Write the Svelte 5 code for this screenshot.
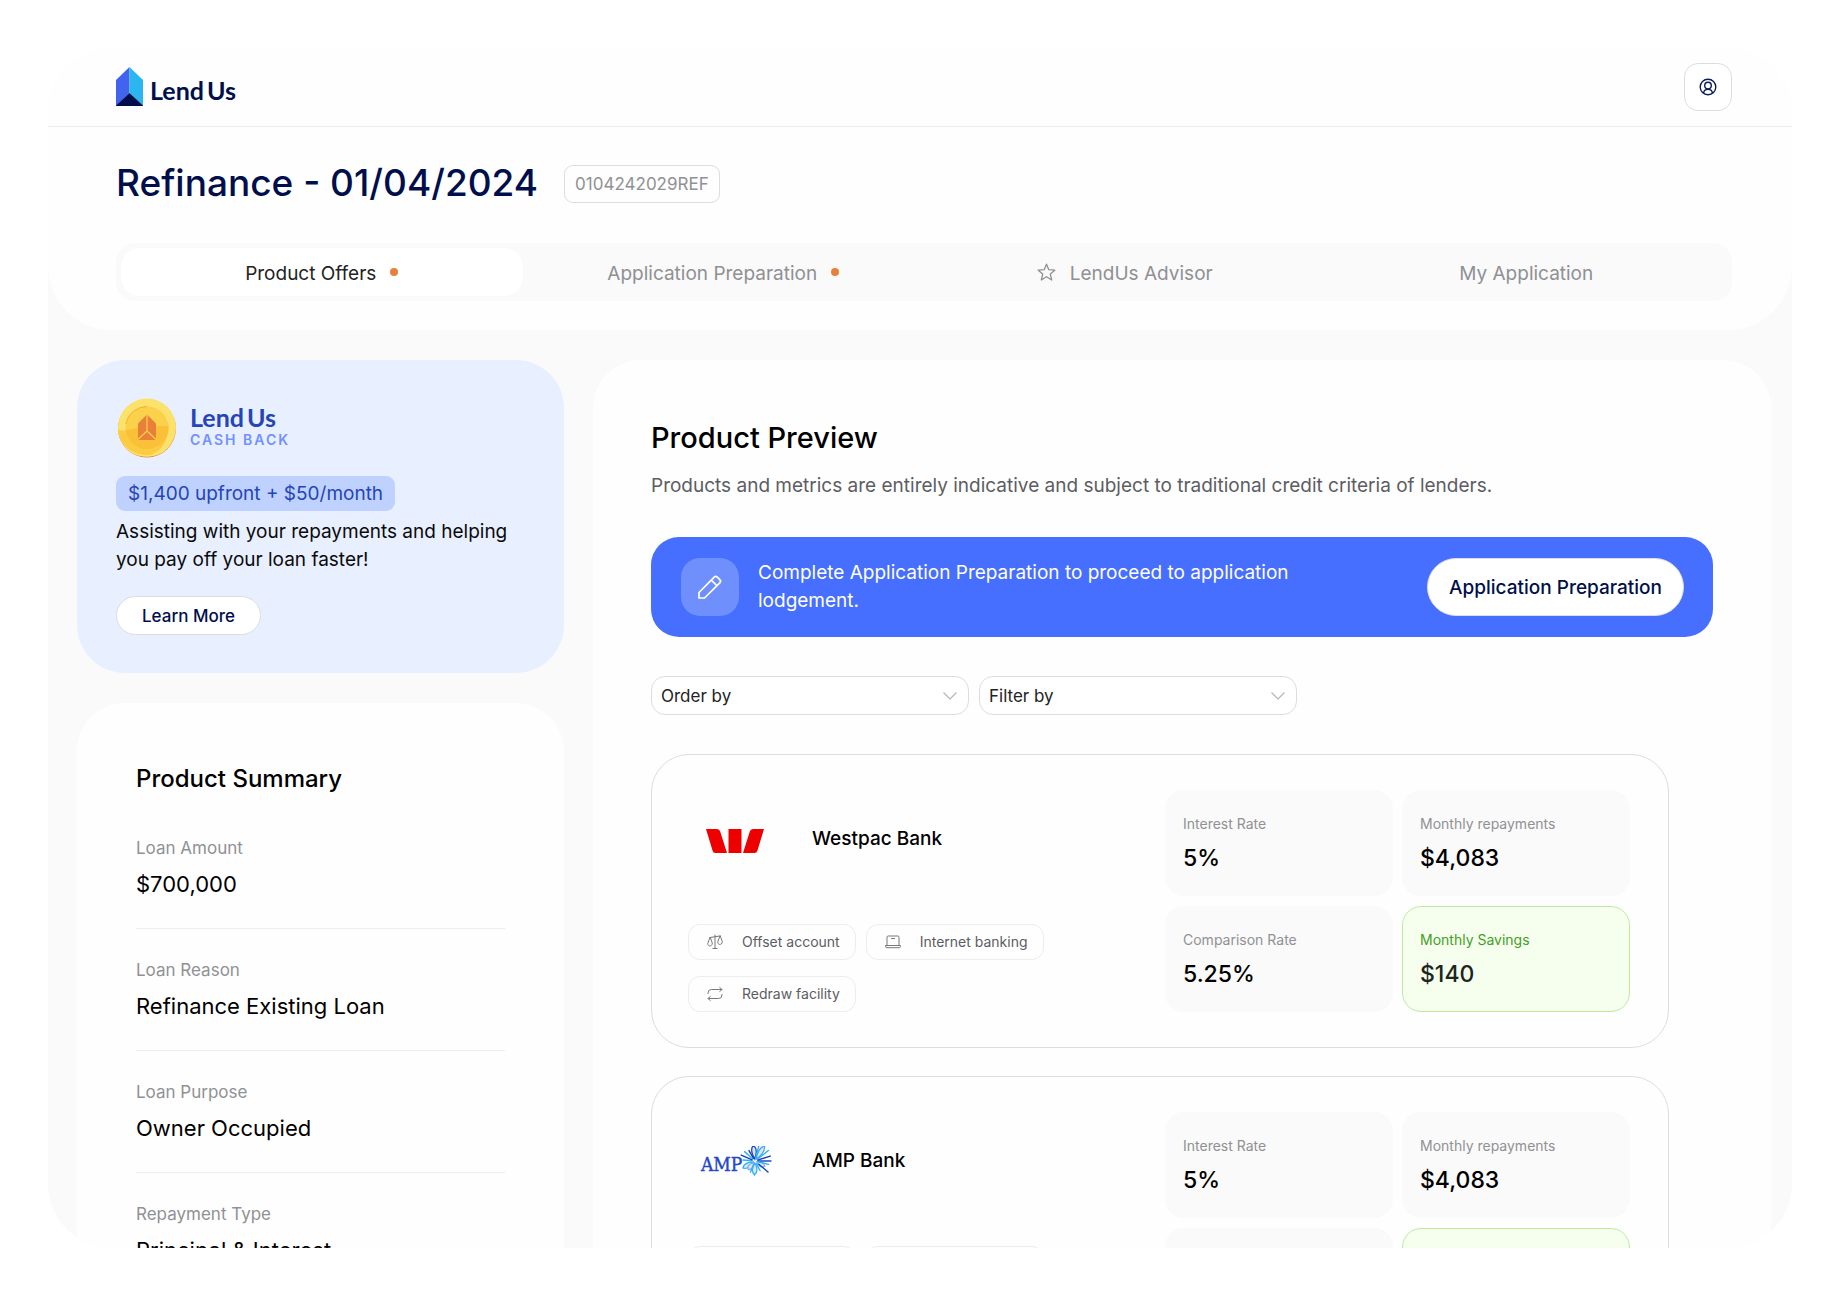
<script>
  const tabs = [
    { label: 'Product Offers', dot: true, active: true },
    { label: 'Application Preparation', dot: true },
    { label: 'LendUs Advisor', star: true },
    { label: 'My Application' }
  ];

  const summary = [
    { label: 'Loan Amount', value: '$700,000' },
    { label: 'Loan Reason', value: 'Refinance Existing Loan' },
    { label: 'Loan Purpose', value: 'Owner Occupied' },
    { label: 'Repayment Type', value: 'Principal & Interest' }
  ];

  const selects = [
    { id: 'order', label: 'Order by' },
    { id: 'filter', label: 'Filter by' }
  ];

  const metrics = [
    { label: 'Interest Rate', value: '5%' },
    { label: 'Monthly repayments', value: '$4,083' },
    { label: 'Comparison Rate', value: '5.25%' },
    { label: 'Monthly Savings', value: '$140', saving: true }
  ];

  const features = [
    { icon: 'scales', label: 'Offset account' },
    { icon: 'laptop', label: 'Internet banking' },
    { icon: 'repeat', label: 'Redraw facility' }
  ];

  const banks = [
    { id: 'westpac', name: 'Westpac Bank' },
    { id: 'amp', name: 'AMP Bank' }
  ];

  // Rays of the AMP starburst: angle, inner radius, outer radius, colour
  const rays = [
    [0, 3, 16, '#2447c8'], [14, 3, 14, '#2cb5f0'], [40, 5, 17, '#1b3fb5'], [62, 3, 11, '#2cb5f0'],
    [112, 3, 12, '#2cb5f0'], [185, 3, 12, '#2cb5f0'], [203, 3, 15, '#1b3fb5'],
    [222, 3, 14, '#2cb5f0'], [240, 3, 12, '#1b3fb5'], [284, 3, 17, '#2cb5f0'],
    [322, 3, 17, '#2cb5f0'], [342, 3, 16, '#1b3fb5']
  ];
  // Petals: angle, length, colour
  const petals = [
    [92, 14, '#2cb5f0'], [150, 14, '#2cb5f0'], [128, 11, '#8fa8f5'], [264, 16, '#2447c8'],
    [302, 18, '#4aa4f0'], [28, 11, '#8fa8f5']
  ];
</script>

<div class="page">
  <div class="window">
    <header class="top">
      <div class="brand-bar">
        <a class="logo" href="#home">
          <svg width="27" height="39" viewBox="0 0 27 39" aria-hidden="true">
            <path d="M13.5 0L0 13v26l13.5-13z" fill="#4163ee" />
            <path d="M13.5 0L27 13v26L13.5 26z" fill="#2cb6f0" />
            <path d="M13.5 26L0 38.5V39h27v-.5z" fill="#000f4b" />
          </svg>
          <span class="wordmark">Lend<span>Us</span></span>
        </a>
        <button class="user" aria-label="Account">
          <svg width="18" height="18" viewBox="0 0 18 18" fill="none" stroke="#0c1b5c" stroke-width="1.4" aria-hidden="true">
            <circle cx="9" cy="9" r="7.8" />
            <circle cx="9" cy="7.6" r="3.3" />
            <path d="M4.6 15.2c.2-2.6 1.6-3.8 4.4-3.8s4.2 1.200 4.400 3.800" />
          </svg>
        </button>
      </div>
      <div class="heading">
        <h1>Refinance - 01/04/2024</h1>
        <span class="ref">0104242029REF</span>
      </div>
      <nav class="tabs">
        {#each tabs as tab}
          <button class="tab" class:active={tab.active}>
            {#if tab.star}
              <svg width="19" height="19" viewBox="0 0 19 19" fill="none" stroke="#8f9094" stroke-width="1.3" stroke-linejoin="round" aria-hidden="true">
                <path d="M9.500 1.200l2.300 5.500 6 .5-4.500 3.900 1.400 5.900-5.200-3.200L4.300 17l1.400-5.900L1.200 7.200l6-.5z" />
              </svg>
            {/if}
            <span>{tab.label}</span>
            {#if tab.dot}<i class="dot"></i>{/if}
          </button>
        {/each}
      </nav>
    </header>

    <main class="body">
      <aside class="side">
        <section class="cashback">
          <div class="cash-head">
            <svg width="60" height="60" viewBox="-1 0 60 60" aria-hidden="true">
              <circle cx="30" cy="30.500" r="29" fill="#ea8a3c" />
              <circle cx="30" cy="29.500" r="29" fill="#fce16a" />
              <path d="M1 32C14 35 22 28 33 28s14 1 17-.5c3 10-2 25-20 31C14 58.500 2 47 1 32z" fill="#fbcb42" />
              <path d="M4 42c6 10 15 15 26 15s20-5 26-15c-5 11-14 16.500-26 16.500S9 53 4 42z" fill="#fce16a" />
              <circle cx="30" cy="30" r="21.500" fill="#fbd04a" />
              <path d="M8.500 31.500C18 32 24 27 33 27.500c8 .5 13 1 18.500 0A21.500 21.500 0 0 1 8.500 31.500z" fill="#fac038" />
              <path d="M8.900 26A21.500 21.500 0 0 1 30 8.500" fill="none" stroke="#f3b03a" stroke-width="1" />
              <path d="M30 16.500l9 9V42H21V25.500z" fill="#e8803a" />
              <path d="M30 17v16M30 33l-9 8.500M30 33l9 8.500" stroke="#fbd04a" stroke-width="1.200" fill="none" />
            </svg>
            <div class="cash-brand">
              <span class="wordmark">Lend<span>Us</span></span>
              <span class="cash-label">CASH BACK</span>
            </div>
          </div>
          <strong class="offer">$1,400 upfront + $50/month</strong>
          <p>Assisting with your repayments and helping you pay off your loan faster!</p>
          <button class="learn">Learn More</button>
        </section>

        <section class="summary">
          <h2>Product Summary</h2>
          <dl>
            {#each summary as row}
              <div class="row">
                <dt>{row.label}</dt>
                <dd>{row.value}</dd>
              </div>
            {/each}
          </dl>
        </section>
      </aside>

      <section class="preview">
        <h2>Product Preview</h2>
        <p class="lead">Products and metrics are entirely indicative and subject to traditional credit criteria of lenders.</p>

        <div class="banner">
          <div class="banner-icon">
            <svg width="26" height="26" viewBox="0 0 26 26" fill="none" stroke="#fff" stroke-width="1.700" stroke-linejoin="round" aria-hidden="true">
              <path d="M2 18.500L17.200 3.200a2.200 2.200 0 0 1 3.100 0l2.500 2.500a2.200 2.200 0 0 1 0 3.100L7.500 24H2zM14.300 6.100l5.600 5.600" />
            </svg>
          </div>
          <p>Complete Application Preparation to proceed to application lodgement.</p>
          <button>Application Preparation</button>
        </div>

        <div class="filters">
          {#each selects as s}
            <div class="select">
              <select id={s.id} aria-label={s.label}>
                <option>{s.label}</option>
              </select>
              <svg width="14" height="8" viewBox="0 0 14 8" fill="none" stroke="#b4b5b8" stroke-width="1.200" aria-hidden="true">
                <path d="M.5.5L7 7l6.500-6.500" />
              </svg>
            </div>
          {/each}
        </div>

        <div class="offers">
          {#each banks as bank}
            <article class="bank">
              <div class="bank-info">
                <div class="bank-head">
                  <div class="bank-logo">
                    {#if bank.id === 'westpac'}
                      <svg width="58" height="24" viewBox="0 0 58 24" fill="#ee0000" aria-hidden="true">
                        <path d="M0 0h11q2.500 0 3.200 2.500L21 24H9.500Q7.200 24 6.500 21.500zM22.500 0h13v24h-13zM58 0H47q-2.500 0-3.200 2.500L37 24h11.500q2.300 0 3-2.500z" />
                      </svg>
                    {:else}
                      <svg width="74" height="34" viewBox="0 0 74 34" aria-hidden="true">
                        <text class="amp" x="3" y="25">AMP</text>
                        <g transform="translate(57 15)" fill="none" stroke-linecap="round">
                          {#each petals as [angle, length, colour]}
                            <path transform="rotate({angle})" d="M2 0Q{length * 0.7} -4.500 {length} 0Q{length * 0.7} 4.500 2 0z" stroke={colour} stroke-width="1.300" fill="#dbe6ff" />
                          {/each}
                          {#each rays as [angle, from, to, colour]}
                            <path transform="rotate({angle})" d="M{from} 0H{to}" stroke={colour} stroke-width="1.400" />
                          {/each}
                        </g>
                      </svg>
                    {/if}
                  </div>
                  <h3>{bank.name}</h3>
                </div>
                <ul class="chips">
                  {#each features as f}
                    <li>
                      <svg width="16" height="16" viewBox="0 0 16 16" fill="none" stroke="#77787c" stroke-width="1" stroke-linejoin="round" stroke-linecap="round" aria-hidden="true">
                        {#if f.icon === 'scales'}
                          <path d="M8 1v13.500M6 14.500h4M3 3.500l10-1.500M3 3.500L.7 9.500c0 3.300 4.600 3.300 4.600 0zM13 2l-2.300 6c0 3.300 4.600 3.300 4.600 0z" />
                        {:else if f.icon === 'laptop'}
                          <path d="M2 11.500V3.200Q2 2 3.200 2h9.600Q14 2 14 3.200v8.300M.6 11.500h14.800v1q0 1.200-1.200 1.200H1.800Q.6 13.700.6 12.500zM6.500 4.500h3" />
                        {:else}
                          <path d="M1 7.500V7q0-3.500 3.500-3.500H15M12.700 1.500l2.300 2-2.300 2M15 8.500V9q0 3.500-3.500 3.500H1M3.300 10.500l-2.300 2 2.300 2" />
                        {/if}
                      </svg>
                      <span>{f.label}</span>
                    </li>
                  {/each}
                </ul>
              </div>
              <dl class="metrics">
                {#each metrics as m}
                  <div class="metric" class:saving={m.saving}>
                    <dt>{m.label}</dt>
                    <dd>{m.value}</dd>
                  </div>
                {/each}
              </dl>
            </article>
          {/each}
        </div>
      </section>
    </main>
  </div>
</div>

<style>
  :global(body) {
    background: #fff;
    font-family: Inter, 'Liberation Sans', sans-serif;
    color: #0a0a0a;
  }
  * {
    box-sizing: border-box;
  }
  h1, h2, h3, p, dl, dd, ul {
    margin: 0;
    padding: 0;
  }
  button, select {
    font-family: inherit;
    color: inherit;
    cursor: pointer;
  }
  svg {
    display: block;
    flex: none;
  }

  .page {
    padding: 48px;
  }
  .window {
    height: calc(100vh - 96px);
    overflow: hidden;
    border-radius: 64px;
    background: #fafafa;
  }

  .top {
    background: #fefefe;
    border-radius: 0 0 64px 64px;
    padding-bottom: 29px;
  }
  .brand-bar {
    display: flex;
    justify-content: space-between;
    align-items: center;
    height: 79px;
    padding: 0 60px 0 68px;
    padding-bottom: 1px;
    border-bottom: 1px solid #ededee;
  }
  .logo {
    display: flex;
    align-items: center;
    gap: 7px;
    color: #000f4b;
    text-decoration: none;
  }
  .wordmark {
    font-family: Lato, sans-serif;
    font-weight: 700;
    font-size: 25px;
    line-height: 30px;
  }
  .logo .wordmark {
    padding-top: 6px;
  }
  .wordmark span {
    margin-left: 3px;
  }
  .user {
    display: grid;
    place-items: center;
    width: 48px;
    height: 48px;
    border: 1px solid #dcdddf;
    border-radius: 14px;
    background: #fff;
  }
  .heading {
    display: flex;
    align-items: center;
    gap: 26px;
    padding: 37px 68px 39px;
  }
  h1 {
    font-size: 37px;
    font-weight: 500;
    line-height: 38px;
    padding-bottom: 2px;
    color: #000f4b;
  }
  .ref {
    padding: 0 10px;
    border: 1px solid #dcdddf;
    border-radius: 9px;
    font-size: 17px;
    line-height: 36px;
    color: #909195;
  }
  .tabs {
    display: grid;
    grid-template-columns: repeat(4, 1fr);
    margin: 0 60px 0 68px;
    padding: 5px;
    border-radius: 19px;
    background: #fafafa;
  }
  .tab {
    display: flex;
    justify-content: center;
    align-items: center;
    gap: 14px;
    height: 48px;
    border: 0;
    border-radius: 19px;
    background: none;
    font-size: 19px;
    color: #8f9094;
  }
  .tab span {
    padding-top: 2px;
  }
  .tab.active {
    background: #fff;
    color: #232323;
  }
  .dot {
    width: 8px;
    height: 8px;
    border-radius: 50%;
    background: #e8803a;
  }

  .body {
    display: grid;
    grid-template-columns: 487px minmax(0, 1fr);
    gap: 29px;
    padding: 30px 21px 30px 29px;
  }
  .side {
    display: flex;
    flex-direction: column;
    gap: 30px;
  }
  .cashback {
    padding: 38px 39px;
    border-radius: 48px;
    background: #e8efff;
  }
  .cash-head {
    display: flex;
    gap: 14px;
    align-items: center;
    margin-bottom: 18px;
  }
  .cash-brand {
    display: flex;
    flex-direction: column;
    padding-bottom: 6px;
    color: #2444b8;
  }
  .cash-label {
    font-size: 14px;
    line-height: 16px;
    font-weight: 600;
    letter-spacing: 2px;
    color: #7291ff;
  }
  .offer {
    display: inline-block;
    padding: 0 12px;
    border-radius: 9px;
    background: #bfd2ff;
    font-size: 19px;
    font-weight: 400;
    line-height: 35px;
    color: #2444b8;
  }
  .cashback p {
    margin: 7px 0 22px;
    font-size: 19px;
    line-height: 28px;
  }
  .learn {
    height: 39px;
    padding: 0 25px;
    border: 1px solid #dcdddf;
    border-radius: 20px;
    background: #fff;
    font-size: 17px;
    font-weight: 500;
    color: #000f4b;
  }
  .summary {
    padding: 60px 59px;
    border-radius: 48px;
    background: #fefefe;
  }
  h2 {
    font-size: 24px;
    font-weight: 500;
    line-height: 32px;
    color: #000;
  }
  .summary dl {
    margin-top: 12px;
  }
  .row {
    padding: 29px 0 30px;
    border-bottom: 1px solid #ededee;
  }
  .row dt {
    font-size: 17px;
    line-height: 24px;
    color: #909195;
  }
  .row dd {
    margin-top: 10px;
    font-size: 22px;
    line-height: 28px;
    color: #000;
  }

  .preview {
    padding: 58px;
    border-radius: 48px;
    background: #fefefe;
  }
  .preview h2 {
    font-size: 29px;
    line-height: 40px;
  }
  .lead {
    margin-top: 14px;
    font-size: 19px;
    line-height: 28px;
    color: #5c5d62;
  }
  .banner {
    display: flex;
    align-items: center;
    gap: 19px;
    margin-top: 37px;
    padding: 21px 29px 21px 30px;
    border-radius: 28px;
    background: #466eff;
    color: #fff;
  }
  .banner-icon {
    display: grid;
    place-items: center;
    flex: none;
    width: 58px;
    height: 58px;
    border-radius: 19px;
    background: #6f8ffd;
  }
  .banner p {
    flex: 1;
    padding-right: 96px;
    font-size: 19px;
    line-height: 28px;
  }
  .banner button {
    height: 58px;
    padding: 0 21px;
    border: 1px solid #dcdddf;
    border-radius: 29px;
    background: #fff;
    font-size: 19px;
    font-weight: 500;
    color: #000f4b;
  }
  .filters {
    display: flex;
    gap: 10px;
    margin-top: 39px;
  }
  .select {
    display: grid;
    align-items: center;
    width: 318px;
  }
  .select select, .select svg {
    grid-area: 1 / 1;
  }
  .select select {
    appearance: none;
    height: 39px;
    padding: 0 36px 0 9px;
    border: 1px solid #dcdddf;
    border-radius: 14px;
    background: #fff;
    font-size: 17px;
    color: #232323;
  }
  .select svg {
    justify-self: end;
    margin-right: 12px;
    pointer-events: none;
  }

  .offers {
    display: flex;
    flex-direction: column;
    gap: 28px;
    margin-top: 39px;
    padding-right: 44px;
  }
  .bank {
    display: flex;
    justify-content: space-between;
    padding: 35px 38px 35px 36px;
    border: 1px solid #dcdddf;
    border-radius: 38px;
  }
  .bank-info {
    display: flex;
    flex-direction: column;
    justify-content: space-between;
    width: 380px;
  }
  .bank-head {
    display: flex;
    align-items: center;
    gap: 30px;
    height: 97px;
  }
  .bank-logo {
    display: grid;
    place-items: center;
    width: 94px;
    padding-top: 4px;
  }
  .amp {
    font-family: 'DejaVu Serif Condensed', 'DejaVu Serif', serif;
    font-size: 19px;
    fill: #2447c8;
    stroke: #2447c8;
    stroke-width: 0.4;
  }
  h3 {
    font-size: 19px;
    line-height: 28px;
    font-weight: 500;
    color: #000;
  }
  .chips {
    display: flex;
    flex-wrap: wrap;
    gap: 16px 10px;
    list-style: none;
  }
  .chips li {
    display: flex;
    align-items: center;
    gap: 19px;
    height: 36px;
    padding: 0 15px 0 18px;
    border: 1px solid #ededee;
    border-radius: 12px;
    font-size: 14px;
    color: #5c5d62;
  }
  .chips span {
    padding-bottom: 2px;
  }
  .metrics {
    display: grid;
    grid-template-columns: 228px 228px;
    gap: 10px 9px;
  }
  .metric {
    padding: 21px 17px 20px;
    border: 1px solid #fafafa;
    border-radius: 19px;
    background: #fafafa;
  }
  .metric dt {
    font-size: 14px;
    line-height: 24px;
    color: #909195;
  }
  .metric dd {
    margin-top: 5px;
    font-size: 23px;
    font-weight: 500;
    line-height: 34px;
    color: #000;
  }
  .metric.saving {
    border-color: #bfeaa0;
    background: #f6ffee;
  }
  .saving dt {
    color: #43a024;
  }
  .saving dd {
    color: #1c261c;
  }
</style>
